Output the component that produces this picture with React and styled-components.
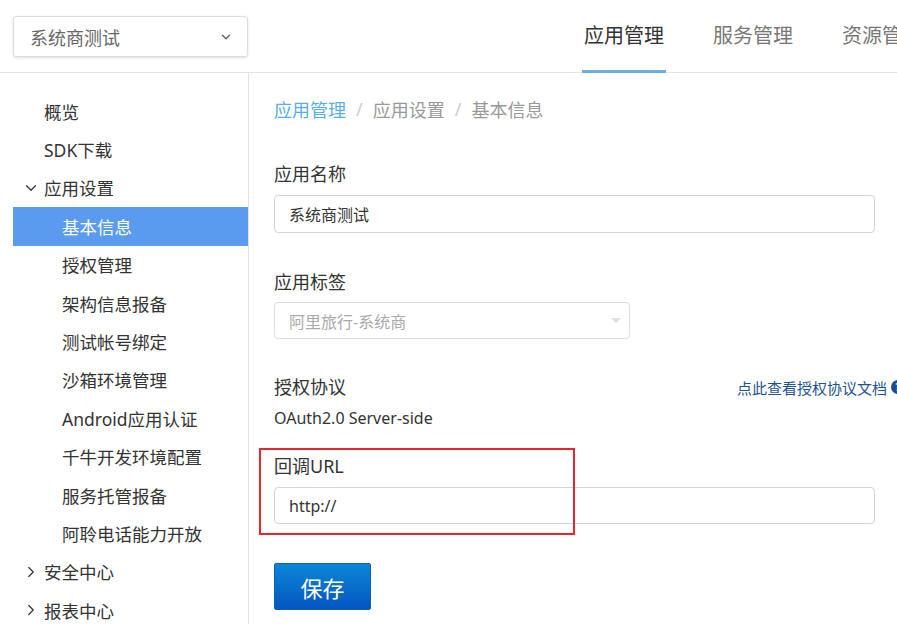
import React from 'react'
import styled, { createGlobalStyle } from 'styled-components'
import { ChevronDown, ChevronRight } from 'lucide-react'

const Global = createGlobalStyle`
html, body {
  margin: 0;
  padding: 0;
  background: #fff;
  overflow: hidden;
}
body {
  font-family: "Noto Sans", "Noto Sans CJK SC", sans-serif;
  color: #333;
}
* { box-sizing: border-box; }
`
const Page = styled.div`
width: 897px;
height: 624px;
overflow: hidden;
display: flex;
flex-direction: column;
`
const Header = styled.div`
height: 73px;
flex-shrink: 0;
display: flex;
align-items: stretch;
border-bottom: 1px solid #e3e3e3;
`
const AppSelect = styled.div`
flex-shrink: 0;
margin: 16px 0 0 13px;
width: 235px;
height: 41px;
border: 1px solid #dcdcdc;
border-radius: 3px;
box-shadow: 0 1px 3px rgba(0,0,0,0.12);
display: flex;
align-items: center;
justify-content: space-between;
padding: 0 14px 0 16px;
font-size: 18px;
color: #666;
`
const Tabs = styled.div`
display: flex;
gap: 45px;
margin-left: 334px;
flex-shrink: 0;
`
const Tab = styled.div`
height: 73px;
padding: 0 2px 1px 2px;
display: flex;
align-items: center;
font-size: 20px;
white-space: nowrap;
color: ${p => p.$active ? '#333' : '#777'};
border-bottom: 3px solid ${p => p.$active ? '#6aaee3' : 'transparent'};
`
const Body = styled.div`
flex: 1;
display: flex;
`
const Sidebar = styled.div`
width: 249px;
flex-shrink: 0;
border-right: 1px solid #e3e3e3;
padding: 19px 0 0 13px;
`
const NavItem = styled.div`
height: 38.4px;
display: flex;
align-items: center;
padding-left: ${p => p.$child ? '49px' : '12px'};
font-size: 17.5px;
white-space: nowrap;
color: ${p => p.$active ? '#fff' : '#333'};
background: ${p => p.$active ? '#5a9bf0' : 'transparent'};
`
const Caret = styled.span`
width: 19px;
display: flex;
align-items: center;
color: #333;
svg { margin-left: -3px; }
`
const Main = styled.div`
flex: 1;
padding: 24px 0 0 25px;
`
const Crumbs = styled.div`
height: 24px;
display: flex;
align-items: center;
font-size: 18px;
color: #999;
gap: 10px;
margin-bottom: 41px;
`
const CrumbLink = styled.span`
color: #5aaee8;
`
const Sep = styled.span`
color: #ccc;
`
const Field = styled.div`
position: relative;
width: 601px;
margin-bottom: ${p => p.$mb ?? 0}px;
`
const Label = styled.div`
height: 24px;
line-height: 24px;
font-size: 18px;
color: #333;
margin-bottom: ${p => p.$mb ?? 9}px;
`
const LabelRow = styled.div`
height: 24px;
display: flex;
align-items: center;
justify-content: space-between;
margin-right: -30px;
margin-bottom: 7px;
`
const DocLink = styled.span`
display: flex;
align-items: center;
gap: 4px;
font-size: 15px;
color: #1d548f;
white-space: nowrap;
`
const Help = styled.span`
width: 14px;
height: 14px;
border-radius: 50%;
background: #1d4f86;
color: #fff;
font-size: 10px;
font-weight: bold;
display: flex;
align-items: center;
justify-content: center;
flex-shrink: 0;
`
const TextInput = styled.div`
height: ${p => p.$h || 38}px;
border: 1px solid #d4d4d4;
border-radius: 4px;
display: flex;
align-items: center;
padding-left: 14px;
font-size: 16px;
color: #333;
`
const DisabledSelect = styled.div`
width: 356px;
height: 37px;
border: 1px solid #dedede;
border-radius: 4px;
display: flex;
align-items: center;
justify-content: space-between;
padding: 0 8px 0 14px;
font-size: 16px;
color: #aaa;
`
const Tri = styled.span`
width: 0;
height: 0;
border-left: 5px solid transparent;
border-right: 5px solid transparent;
border-top: 5px solid #e0e0e0;
`
const Value = styled.div`
height: 24px;
line-height: 24px;
font-size: 16px;
color: #333;
`
const Highlight = styled.div`
position: absolute;
left: -15px;
top: -6px;
width: 316px;
height: 87px;
border: 2px solid #e8262a;
pointer-events: none;
`
const SaveButton = styled.button`
display: block;
width: 97px;
height: 47px;
border: 1px solid #0a5fb8;
border-radius: 2px;
background: linear-gradient(#0c86d6, #0456c2);
color: #fff;
font-family: "Noto Sans CJK SC", sans-serif;
font-size: 22px;
cursor: pointer;
`

const nav = [
  { label: '概览' },
  { label: 'SDK下载' },
  { label: '应用设置', caret: 'down' },
  { label: '基本信息', child: true, active: true },
  { label: '授权管理', child: true },
  { label: '架构信息报备', child: true },
  { label: '测试帐号绑定', child: true },
  { label: '沙箱环境管理', child: true },
  { label: 'Android应用认证', child: true },
  { label: '千牛开发环境配置', child: true },
  { label: '服务托管报备', child: true },
  { label: '阿聆电话能力开放', child: true },
  { label: '安全中心', caret: 'right' },
  { label: '报表中心', caret: 'right' },
]

export default function App() {
  return (
    <Page>
      <Global />
      <Header>
        <AppSelect>
          <span>系统商测试</span>
          <ChevronDown size={14} strokeWidth={2.5} color="#666" />
        </AppSelect>
        <Tabs>
          <Tab $active>应用管理</Tab>
          <Tab>服务管理</Tab>
          <Tab>资源管理</Tab>
        </Tabs>
      </Header>
      <Body>
        <Sidebar>
          {nav.map(item => (
            <NavItem key={item.label} $child={item.child} $active={item.active}>
              {!item.child && (
                <Caret>
                  {item.caret === 'down' && <ChevronDown size={18} strokeWidth={1.6} />}
                  {item.caret === 'right' && <ChevronRight size={18} strokeWidth={1.6} />}
                </Caret>
              )}
              {item.label}
            </NavItem>
          ))}
        </Sidebar>
        <Main>
          <Crumbs>
            <CrumbLink>应用管理</CrumbLink>
            <Sep>/</Sep>
            <span>应用设置</span>
            <Sep>/</Sep>
            <span>基本信息</span>
          </Crumbs>
          <Field $mb={37}>
            <Label>应用名称</Label>
            <TextInput>系统商测试</TextInput>
          </Field>
          <Field $mb={36}>
            <Label $mb={8}>应用标签</Label>
            <DisabledSelect>
              <span>阿里旅行-系统商</span>
              <Tri />
            </DisabledSelect>
          </Field>
          <Field $mb={24}>
            <LabelRow>
              <Label $mb={0}>授权协议</Label>
              <DocLink>点此查看授权协议文档<Help>?</Help></DocLink>
            </LabelRow>
            <Value>OAuth2.0 Server-side</Value>
          </Field>
          <Field $mb={39}>
            <Label>回调URL</Label>
            <TextInput $h={37}>http://</TextInput>
            <Highlight />
          </Field>
          <SaveButton>保存</SaveButton>
        </Main>
      </Body>
    </Page>
  )
}
